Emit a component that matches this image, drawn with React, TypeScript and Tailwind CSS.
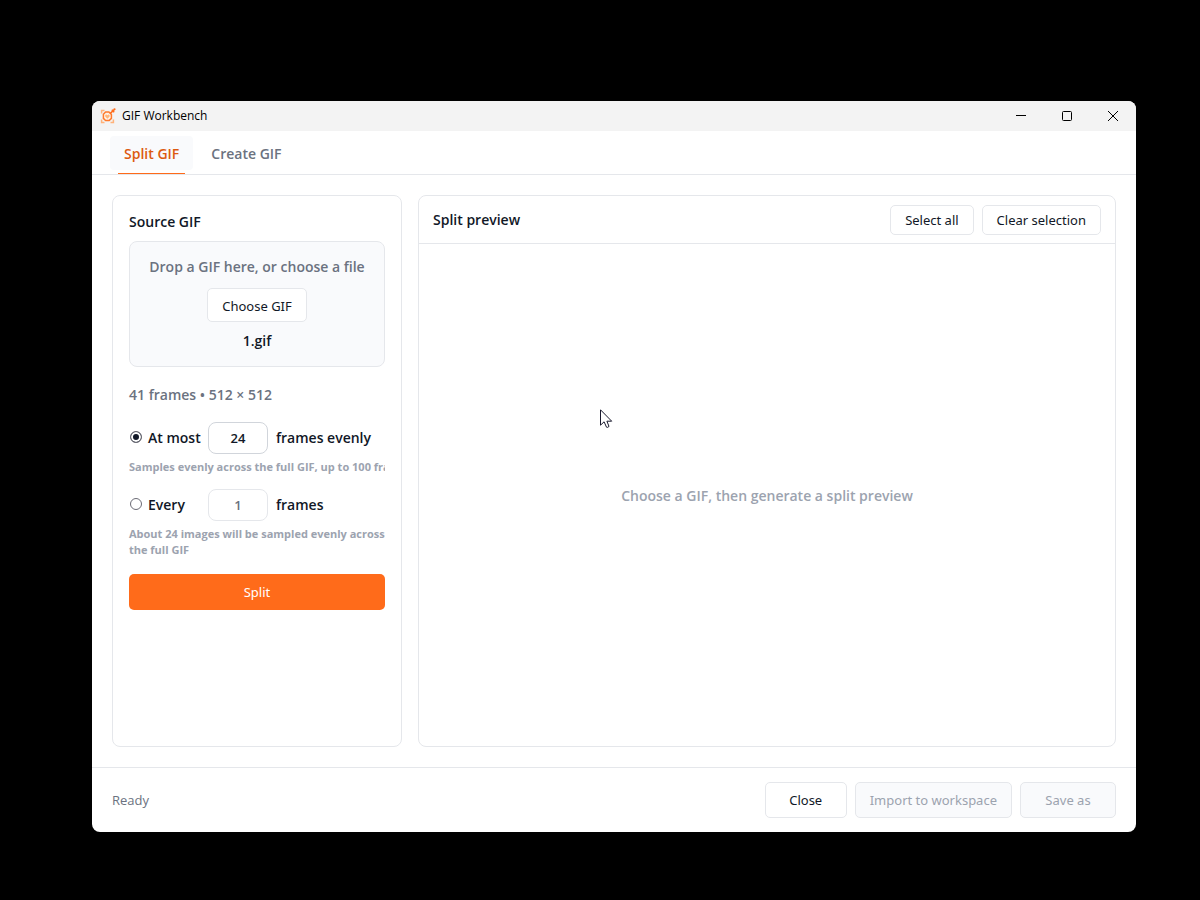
import { useState } from 'react';
import type { ButtonHTMLAttributes } from 'react';
import { clsx } from 'clsx';

type Mode = 'atMost' | 'every';

function AppIcon() {
  return (
    <svg width="16" height="16" viewBox="0 0 16 16" fill="none" aria-hidden="true">
      <path
        d="M1.6 5.5V2.6H4.5M1.6 11.5V14.4H4.5M10.5 14.4H13.4V11.5"
        stroke="#ffb27a"
        strokeWidth="1.5"
      />
      <path
        d="M5.6 4H8.9L11.4 6.5V10.4L9.2 12.6H5.6L3.4 10.4V6.2Z"
        stroke="#ff7a2b"
        strokeWidth="1.5"
        fill="#fff1e6"
      />
      <path d="M7.4 10.8L5.2 8.6V7L6.4 6.4L7.4 7.2L8.4 6.4L9.6 7V8.6Z" fill="#ffb67a" />
      <path d="M10.4 5.4L14 1.8M11.8 1.8L14.2 4.2" stroke="#ff6b1a" strokeWidth="1.5" />
      <circle cx="14.5" cy="1.3" r="1.1" fill="#ff6b1a" />
    </svg>
  );
}

function TitleBar() {
  const control = 'flex h-full w-[46px] items-center justify-center text-black';

  return (
    <header className="flex h-[30px] items-center justify-between bg-[#f3f3f3]">
      <div className="flex items-center gap-1.5 pl-2">
        <AppIcon />
        <span className="text-xs text-black">GIF Workbench</span>
      </div>
      <div className="flex h-full">
        <button type="button" aria-label="Minimize" className={control}>
          <svg width="10" height="10" viewBox="0 0 10 10" stroke="currentColor">
            <path d="M0 4.5H10" />
          </svg>
        </button>
        <button type="button" aria-label="Maximize" className={control}>
          <svg width="10" height="10" viewBox="0 0 10 10" fill="none" stroke="currentColor">
            <rect x="0.5" y="0.5" width="9" height="9" rx="1" />
          </svg>
        </button>
        <button type="button" aria-label="Close window" className={control}>
          <svg width="10" height="10" viewBox="0 0 10 10" stroke="currentColor">
            <path d="M0 0L10 10M10 0L0 10" />
          </svg>
        </button>
      </div>
    </header>
  );
}

function Tab({ label, active }: { label: string; active?: boolean }) {
  return (
    <button type="button" role="tab" aria-selected={!!active} className="flex flex-col justify-between pt-[5px]">
      <span
        className={clsx(
          'flex h-[34px] items-center rounded px-3.5 pt-0.5 text-sm font-semibold',
          active ? 'bg-[#f9fafc] text-[#dd5a10]' : 'text-[#6b7280]',
        )}
      >
        {label}
      </span>
      {active && <span className="mx-2 h-px self-stretch bg-[#ff6b1a]" />}
    </button>
  );
}

function Button({ className, ...props }: ButtonHTMLAttributes<HTMLButtonElement>) {
  return (
    <button
      type="button"
      className={clsx(
        "rounded-[5px] border border-[#e5e7eb] bg-white px-3.5 pt-0.5 font-['Noto_Sans','Open_Sans',sans-serif] text-[13px] text-[#111827]",
        'disabled:bg-[#f9fafc] disabled:text-[#9ca3af]',
        className,
      )}
      {...props}
    />
  );
}

interface ModeRowProps {
  id: string;
  label: string;
  unit: string;
  value: number;
  checked: boolean;
  onSelect: () => void;
}

function ModeRow({ id, label, unit, value, checked, onSelect }: ModeRowProps) {
  return (
    <div className="flex items-center gap-2 text-sm font-semibold text-[#111827]">
      <label className="flex w-[71px] items-baseline gap-1.5 pl-px whitespace-nowrap">
        <input
          type="radio"
          name="mode"
          checked={checked}
          onChange={onSelect}
          className="size-3 shrink-0 appearance-none rounded-full border border-[#6b6b75] bg-white checked:bg-[#111827] checked:shadow-[inset_0_0_0_2px_white]"
        />
        {label}
      </label>
      <input
        id={id}
        type="text"
        inputMode="numeric"
        defaultValue={value}
        disabled={!checked}
        aria-label={`${label} ${unit}`}
        className="h-8 w-[60px] rounded-lg border border-[#d1d5db] bg-white text-center text-[13px] disabled:border-[#e5e7eb] disabled:text-[#6b7280]"
      />
      <label htmlFor={id}>{unit}</label>
    </div>
  );
}

function SourcePanel() {
  const [mode, setMode] = useState<Mode>('atMost');

  return (
    <section className="flex w-[290px] shrink-0 flex-col rounded-lg border border-[#e5e7eb] p-4">
      <h2 className="text-sm leading-5 font-semibold text-[#111827]">Source GIF</h2>
      <div className="mt-[9px] flex flex-col items-center rounded-lg border border-[#e5e7eb] bg-[#f9fafc] py-[15px] text-sm leading-5 font-semibold">
        <p className="text-[#6b7280]">Drop a GIF here, or choose a file</p>
        <Button className="mt-[11px] h-[34px] font-normal">Choose GIF</Button>
        <p className="mt-[9px] text-[#111827]">1.gif</p>
      </div>
      <p className="mt-[18px] text-sm leading-5 font-semibold text-[#6b7280]">41 frames • 512 × 512</p>
      <div className="mt-[17px]">
        <ModeRow
          id="max-frames"
          label="At most"
          unit="frames evenly"
          value={24}
          checked={mode === 'atMost'}
          onSelect={() => setMode('atMost')}
        />
        <p className="mt-[5px] overflow-hidden text-[11px] leading-4 font-bold whitespace-nowrap text-[#9ca3af]">
          Samples evenly across the full GIF, up to 100 frames
        </p>
      </div>
      <div className="mt-3.5">
        <ModeRow
          id="frame-step"
          label="Every"
          unit="frames"
          value={1}
          checked={mode === 'every'}
          onSelect={() => setMode('every')}
        />
        <p className="mt-[5px] text-[11px] leading-4 font-bold text-[#9ca3af]">
          About 24 images will be sampled evenly across the full GIF
        </p>
      </div>
      <button
        type="button"
        className="mt-4 h-9 rounded-[5px] bg-[#ff6b1a] pt-0.5 font-['Noto_Sans','Open_Sans',sans-serif] text-[13px] text-white"
      >
        Split
      </button>
    </section>
  );
}

function PreviewPanel() {
  return (
    <section className="flex min-w-0 flex-1 flex-col rounded-lg border border-[#e5e7eb]">
      <div className="flex h-12 items-center justify-between border-b border-[#e5e7eb] px-3.5">
        <h2 className="text-sm font-semibold text-[#111827]">Split preview</h2>
        <div className="flex gap-2">
          <Button className="h-[30px]">Select all</Button>
          <Button className="h-[30px]">Clear selection</Button>
        </div>
      </div>
      <div className="flex flex-1 items-center justify-center pt-0.5 text-sm font-semibold text-[#9ca3af]">
        Choose a GIF, then generate a split preview
      </div>
    </section>
  );
}

function Cursor() {
  return (
    <svg
      className="pointer-events-none absolute top-[409px] left-[600px]"
      width="13"
      height="20"
      viewBox="0 0 13 20"
      aria-hidden="true"
    >
      <path
        d="M0.5 0.8V16.2L4.1 12.8L6.5 18.2Q7.6 18.9 9 17.4L6.9 12.2H11.7Z"
        fill="#fff"
        stroke="#1a1a2e"
        strokeLinejoin="round"
      />
    </svg>
  );
}

export default function App() {
  return (
    <div className="relative flex min-h-screen flex-col bg-black pt-[101px] pr-16 pb-[68px] pl-[92px] font-['Open_Sans','Noto_Sans',sans-serif]">
      <div className="flex flex-1 flex-col overflow-hidden rounded-lg bg-white">
        <TitleBar />
        <nav role="tablist" className="flex h-11 gap-1 border-b border-[#e5e7eb] px-[18px]">
          <Tab label="Split GIF" active />
          <Tab label="Create GIF" />
        </nav>
        <main className="flex flex-1 gap-4 p-5">
          <SourcePanel />
          <PreviewPanel />
        </main>
        <footer className="flex h-[65px] items-center justify-between border-t border-[#e5e7eb] px-5">
          <span className="pt-0.5 text-[13px] text-[#6b7280]">Ready</span>
          <div className="flex gap-2">
            <Button className="h-9 w-[82px]">Close</Button>
            <Button className="h-9" disabled>
              Import to workspace
            </Button>
            <Button className="h-9 w-24" disabled>
              Save as
            </Button>
          </div>
        </footer>
      </div>
      <Cursor />
    </div>
  );
}
